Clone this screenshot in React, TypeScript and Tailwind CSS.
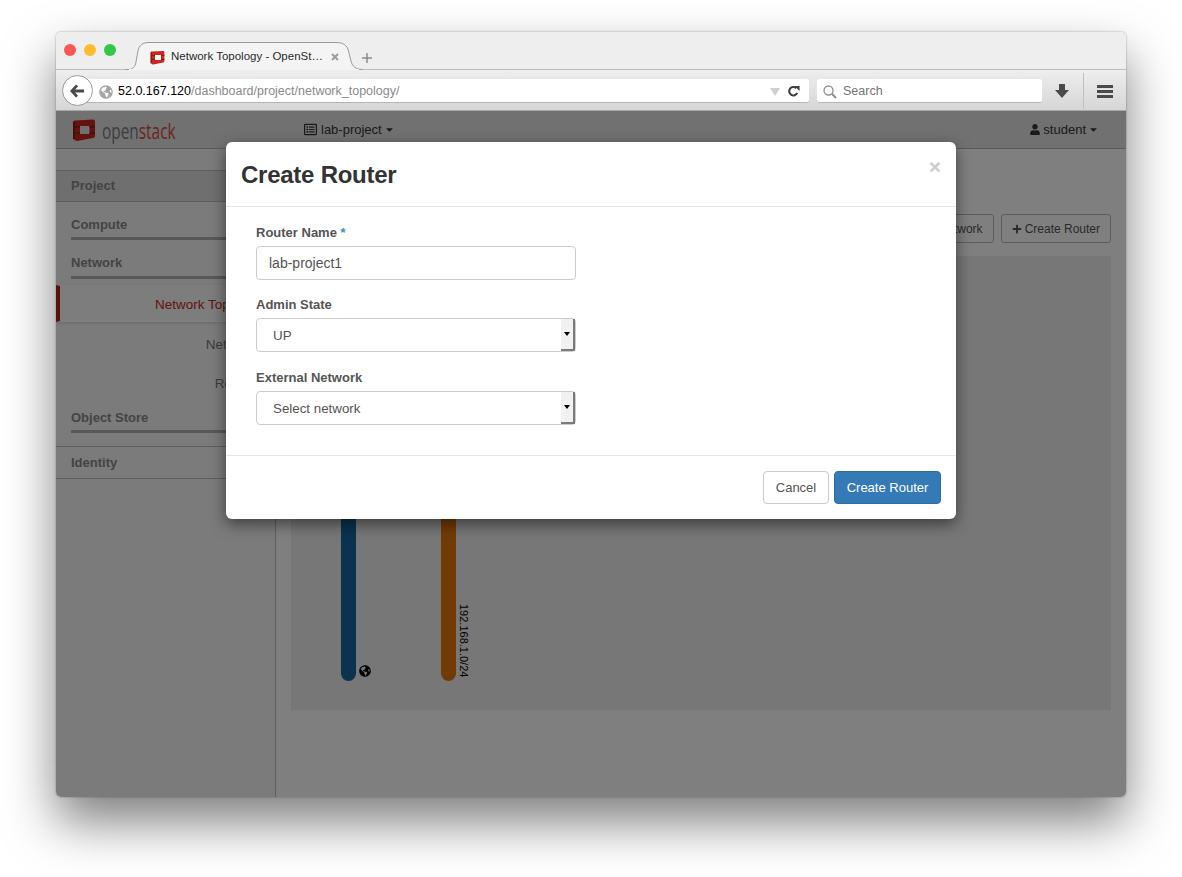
import { FaCaretDown, FaGlobeAmericas, FaPlus, FaRegListAlt, FaUser } from "react-icons/fa";

function CubeLogo({ className, hole }: { className: string; hole: string }) {
  return (
    <svg viewBox="0 0 24 24" className={className}>
      <path d="M3 2.500 21 1.500q2 0 2 2V18q0 2-2 2L5 23q-2 .3-2-1.500l-2-.5V4.500Q1 2.600 3 2.500Z" fill="#c8281e" />
      <path d="M1 4.500 3 2.500V21.500L1 21Z" fill="#8f1a14" />
      <path d="M8 8h9.500v8H8Z" fill={hole} />
      <path d="M3 8h5v1.500H3ZM17.500 14.500H23V16h-5.500ZM3 14.500h5V16H3ZM17.500 8H23v1.500h-5.500Z" fill="#8f1a14" />
    </svg>
  );
}

function TabShape() {
  return (
    <svg viewBox="0 0 238 29" className="absolute left-[-12px] top-0 h-[29px] w-[238px]">
      <path
        d="M0 27.500H3C8 27.500 10 25 11 20L13 9C14 3 18 .5 24 .5H211C218 .5 222 3 223.500 9L226 19C227.500 25 231 27.500 238 27.500"
        fill="#f4f4f4"
        stroke="#999999"
      />
      <path d="M4 27H234V29H4Z" fill="#f4f4f4" />
    </svg>
  );
}

function TabBar() {
  return (
    <div className="relative flex h-[38px] border-b border-[#bdbdbd] bg-[#eeeeee]">
      <div className="flex items-start gap-[8px] pl-[8px] pt-[12px]">
        <span className="h-[12px] w-[12px] rounded-full bg-[#fc5753]" />
        <span className="h-[12px] w-[12px] rounded-full bg-[#fdbc2e]" />
        <span className="h-[12px] w-[12px] rounded-full bg-[#33c748]" />
      </div>
      <div className="relative ml-[21px] mt-[10px] h-[28px] w-[225px]">
        <TabShape />
        <div className="relative flex h-[28px] items-center pl-[13px] pt-[2px]">
          <CubeLogo className="h-[15px] w-[15px]" hole="#ffffff" />
          <span className="ml-[6px] w-[152px] overflow-hidden whitespace-nowrap text-[11.500px] text-[#2b2b2b]">Network Topology - OpenSt…</span>
          <svg viewBox="0 0 8 8" className="ml-[8px] h-[8px] w-[8px]">
            <path d="M1 1l6 6M7 1 1 7" stroke="#9c9c9c" strokeWidth="2" />
          </svg>
        </div>
      </div>
      <svg viewBox="0 0 10 10" className="ml-0 mt-[21px] h-[10px] w-[10px]">
        <path d="M5 0v10M0 5h10" stroke="#8a8a8a" strokeWidth="1.500" />
      </svg>
    </div>
  );
}

function Toolbar() {
  return (
    <div className="relative flex h-[41px] items-center border-b border-[#a9a9a9] bg-gradient-to-b from-[#eeeeee] to-[#d6d6d6] pl-[19px] pt-[2px]">
      <div className="absolute left-[6px] top-[5px] flex h-[31px] w-[31px] items-center justify-center rounded-full border border-[#9a9a9a] bg-white">
        <svg viewBox="0 0 16 14" className="h-[14px] w-[15px]">
          <path d="M7.500 1 2 7l5.500 6M2.500 7H15" fill="none" stroke="#4a4a4a" strokeWidth="3" />
        </svg>
      </div>
      <div className="flex h-[24px] w-[734px] items-center rounded-r-[3px] border-b border-[#b5b5b5] bg-white pl-[24px] pr-[9px] pt-[2px]">
        <FaGlobeAmericas className="h-[14px] w-[14px] text-[#a5a5a5]" />
        <span className="ml-[5px] text-[12.500px] text-[#8a8a8a]">
          <span className="text-black">52.0.167.120</span>/dashboard/project/network_topology/
        </span>
        <span className="ml-auto h-0 w-0 border-x-[5px] border-t-[8px] border-x-transparent border-t-[#cfcfcf]" />
        <svg viewBox="0 0 14 14" className="ml-[7px] h-[13px] w-[13px]">
          <path d="M11 8.500A4.500 4.500 0 1 1 10 3.500" fill="none" stroke="#3f3f3f" strokeWidth="2.200" />
          <path d="M8 1h5.500v5.500Z" fill="#3f3f3f" />
        </svg>
      </div>
      <div className="ml-[8px] flex h-[24px] w-[225px] items-center rounded-[3px] border-b border-[#b5b5b5] bg-white pl-[6px] pt-[2px]">
        <svg viewBox="0 0 14 14" className="h-[14px] w-[14px]">
          <circle cx="5.500" cy="5.500" r="4.500" fill="none" stroke="#8f8f8f" strokeWidth="1.300" />
          <path d="M8.800 8.800 13 13" stroke="#8f8f8f" strokeWidth="2" />
        </svg>
        <span className="ml-[6px] text-[12.500px] text-[#757575]">Search</span>
      </div>
      <svg viewBox="0 0 14 14" className="ml-[13px] h-[14px] w-[14px]">
        <path d="M4 0h6v6h4l-7 8-7-8h4Z" fill="#4a4a4a" />
      </svg>
      <div className="ml-[14px] h-[36px] w-px bg-[#c0c0c0]" />
      <div className="ml-[13px] flex w-[16px] flex-col gap-[2px]">
        <span className="h-[3px] bg-[#4a4a4a]" />
        <span className="h-[3px] bg-[#4a4a4a]" />
        <span className="h-[3px] bg-[#4a4a4a]" />
      </div>
    </div>
  );
}

function Header() {
  return (
    <div className="flex h-[38px] items-center border-b border-[#b4b4b4] bg-[#e2e2e2] pl-[16px] text-[13px] text-[#363636]">
      <CubeLogo className="h-[24px] w-[24px]" hole="#e2e2e2" />
      <span className="ml-[6px] w-[73px] origin-left scale-x-[0.7] whitespace-nowrap font-['Open_Sans'] text-[22px] leading-none text-[#7a7a7a]">
        open<span className="text-[#dc4640]">stack</span>
      </span>
      <FaRegListAlt className="ml-[129px] h-[13px] w-[13px]" />
      <span className="ml-[4px]">lab-project</span>
      <FaCaretDown className="ml-[3px] h-[11px] w-[9px]" />
      <FaUser className="ml-auto h-[11px] w-[10px]" />
      <span className="ml-[3px]">student</span>
      <FaCaretDown className="ml-[3px] mr-[28px] h-[11px] w-[9px]" />
    </div>
  );
}

function SideGroup({ label, height, gap }: { label: string; height: string; gap: string }) {
  return (
    <div className={`flex flex-col justify-end pl-[15px] pr-[15px] ${height}`}>
      <span className={`text-[13px] font-bold leading-[18px] text-[#888888] ${gap}`}>{label}</span>
      <span className="h-[3px] bg-[#b0b0b0]" />
    </div>
  );
}

function Sidebar() {
  return (
    <div className="w-[220px] shrink-0 border-r border-[#bcbcbc] bg-[#f6f6f6] pt-[21px]">
      <div className="flex h-[32px] items-center border-y border-[#bdbdbd] bg-[#dedede] pl-[15px] text-[13px] font-bold text-[#888888]">Project</div>
      <SideGroup label="Compute" height="h-[38px]" gap="mb-[3px]" />
      <SideGroup label="Network" height="h-[39px]" gap="mb-[4px]" />
      <div className="mt-[6px] flex h-[37px] items-center justify-end border-y border-l-[4px] border-y-white border-l-[#b8271c] bg-[#fafafa] pr-[13px] pt-[3px] text-[13.500px] text-[#c9281c] shadow-[0_1px_3px_rgba(0,0,0,0.15)]">Network Topology</div>
      <div className="flex h-[39px] items-center justify-end pr-[13px] pt-[8px] text-[13.500px] text-[#777777]">Networks</div>
      <div className="flex h-[39px] items-center justify-end pr-[13px] pt-[7px] text-[13.500px] text-[#777777]">Routers</div>
      <SideGroup label="Object Store" height="h-[33px]" gap="mb-[3px]" />
      <div className="mt-[13px] flex h-[33px] items-center border-y border-[#bdbdbd] pl-[15px] text-[13px] font-bold text-[#888888]">Identity</div>
    </div>
  );
}

function Topology() {
  return (
    <div className="relative min-w-0 flex-1 bg-white px-[15px] pt-[65px]">
      <div className="flex justify-end gap-[7px]">
        <button className="flex h-[29px] items-center gap-[3px] rounded-[3px] border border-[#bbbbbb] bg-white px-[10px] text-[12px] text-[#555555]">
          <FaPlus className="h-[10px] w-[10px]" /> Create Network
        </button>
        <button className="flex h-[29px] items-center gap-[3px] rounded-[3px] border border-[#bbbbbb] bg-white px-[10px] text-[12px] text-[#555555]">
          <FaPlus className="h-[10px] w-[10px]" /> Create Router
        </button>
      </div>
      <div className="relative mt-[13px] h-[454px] bg-[#eeeeee]">
        <span className="absolute bottom-[29px] left-[50px] top-[40px] w-[15px] rounded-[8px] bg-[#17649e]" />
        <span className="absolute bottom-[29px] left-[150px] top-[40px] w-[15px] rounded-[8px] bg-[#e4770b]" />
        <FaGlobeAmericas className="absolute bottom-[33px] left-[68px] h-[12px] w-[12px] text-black" />
        <span className="absolute bottom-[33px] left-[167px] text-[11px] leading-[12px] text-black [writing-mode:vertical-rl]">192.168.1.0/24</span>
      </div>
    </div>
  );
}

function SelectBox({ value }: { value: string }) {
  return (
    <div className="flex h-[34px] items-center rounded-[4px] border border-[#cccccc] bg-white pl-[16px] text-[13.330px] text-[#555555]">
      <span className="pt-[2px]">{value}</span>
      <div className="ml-auto flex h-[32px] w-[14px] items-center justify-center border-b-2 border-r-2 border-[#7a7a7a] bg-[#f1f1f1]">
        <span className="h-0 w-0 border-x-[3px] border-t-[4px] border-x-transparent border-t-black" />
      </div>
    </div>
  );
}

function CreateRouterModal() {
  return (
    <div className="absolute left-[170px] top-[31px] w-[730px] rounded-[6px] bg-white font-['Liberation_Sans',sans-serif] shadow-[0_5px_15px_rgba(0,0,0,0.5)]">
      <div className="flex h-[65px] items-start justify-between border-b border-[#e5e5e5] pl-[15px] pr-[15px]">
        <h3 className="mt-[17px] text-[24px] font-bold leading-[31px] tracking-[-0.25px] text-[#333333]">Create Router</h3>
        <span className="mt-[14px] text-[21px] font-bold leading-[21px] text-[#cccccc]">×</span>
      </div>
      <div className="flex h-[248px] w-[350px] flex-col pl-[30px] pt-[15px] text-[13px] font-bold text-[#555555]">
        <label className="h-[24px] pt-[1px] leading-[20px]">
          Router Name <span className="text-[#428bca]">*</span>
        </label>
        <div className="flex h-[34px] items-center rounded-[4px] border border-[#cccccc] pl-[12px] text-[14px] font-normal">lab-project1</div>
        <label className="mt-[14px] h-[24px] pt-[1px] leading-[20px]">Admin State</label>
        <div className="font-normal">
          <SelectBox value="UP" />
        </div>
        <label className="mt-[15px] h-[24px] pt-[1px] leading-[20px]">External Network</label>
        <div className="font-normal">
          <SelectBox value="Select network" />
        </div>
      </div>
      <div className="flex h-[64px] items-start justify-end gap-[5px] border-t border-[#e5e5e5] pr-[15px] pt-[15px] text-[13px]">
        <button className="h-[33px] w-[66px] rounded-[4px] border border-[#cccccc] bg-white text-[#555555]">Cancel</button>
        <button className="h-[33px] w-[107px] rounded-[4px] border border-[#2e6da4] bg-[#337ab7] text-white">Create Router</button>
      </div>
    </div>
  );
}

export default function App() {
  return (
    <div className="h-[877px] overflow-hidden bg-white pl-[56px] pt-[32px] font-['Liberation_Sans',sans-serif]">
      <div className="flex h-[765px] w-[1070px] flex-col overflow-visible rounded-[5px] shadow-[0_25px_50px_rgba(0,0,0,0.5),0_0_2px_rgba(0,0,0,0.4)]">
        <div className="overflow-hidden rounded-t-[5px]">
          <TabBar />
          <Toolbar />
        </div>
        <div className="relative min-h-0 flex-1 overflow-hidden rounded-b-[5px]">
          <Header />
          <div className="flex h-[648px]">
            <Sidebar />
            <Topology />
          </div>
          <div className="absolute inset-0 bg-black/50" />
          <CreateRouterModal />
        </div>
      </div>
    </div>
  );
}
